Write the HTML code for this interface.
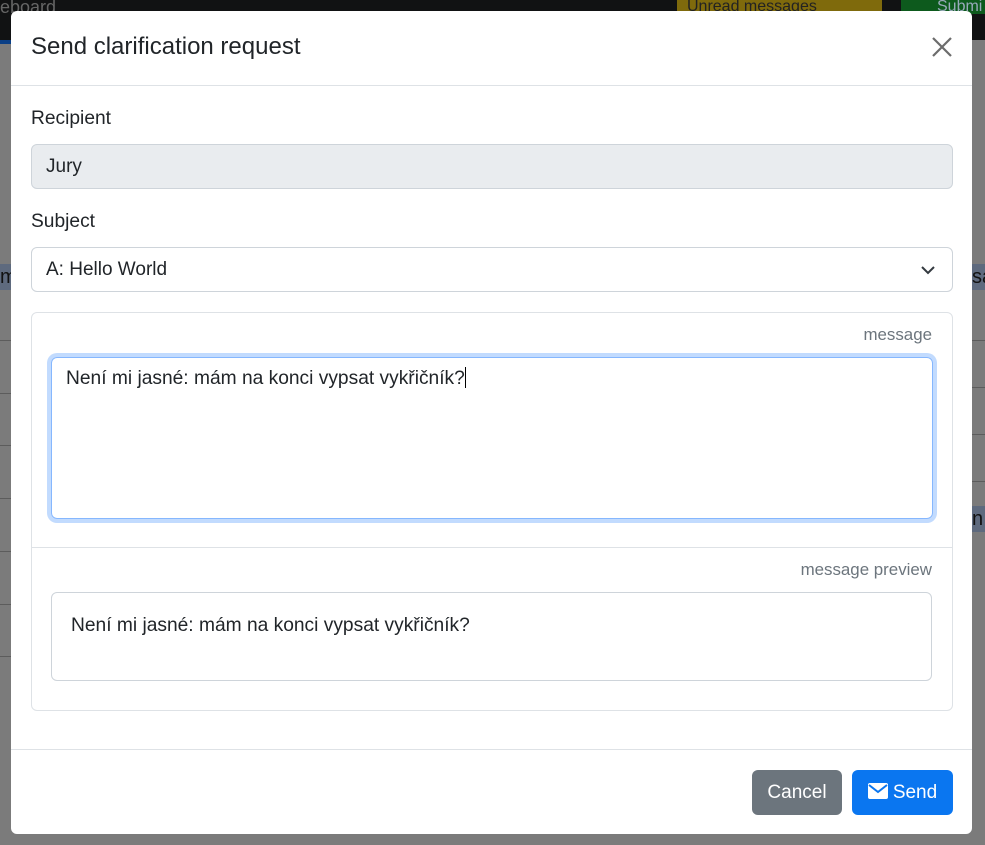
<!DOCTYPE html>
<html><head><meta charset="utf-8"><style>
*{box-sizing:border-box}
body{margin:0;width:985px;height:845px;overflow:hidden;background:#7b7b7b;font-family:"Liberation Sans",sans-serif;position:relative;color:#212529}
.nav{position:absolute;left:0;top:0;width:985px;height:40px;background:#111213}
.bluebar{position:absolute;left:0;top:40px;width:11px;height:4px;background:#0a3f86}
.unread{position:absolute;left:677px;top:0;width:205px;height:14px;background:#7f6a0c;color:#222;font-size:16px;line-height:14px;padding-left:10px;overflow:hidden}
.submit{position:absolute;left:901px;top:0;width:84px;height:14px;background:#0d5a1d;color:#9ab;font-size:16px;line-height:14px;padding-left:36px;overflow:hidden}
.sb{position:absolute;left:0;top:0;font-size:18px;color:#666;line-height:14px}
.hl{position:absolute;background:#5e6a7e;height:26px;font-size:20px;color:#111;line-height:26px;overflow:hidden}
.row{position:absolute;height:1px;background:#5c5c5c}
.modal{position:absolute;left:11px;top:11px;width:961px;height:823px;background:#fff;border-radius:6px}
.hdr{height:75px;border-bottom:1px solid #dee2e6;padding:20px 20px;font-size:24px;line-height:32px}
.close{position:absolute;right:20px;top:26px;width:20px;height:20px}
.lbl{position:absolute;left:20px;font-size:19.2px}
.inp{position:absolute;left:20px;width:922px;height:45px;border:1px solid #ced4da;border-radius:6px;font-size:19px;padding:0 14px;line-height:43px}
.card{position:absolute;left:20px;top:301px;width:922px;height:399px;border:1px solid #dee2e6;border-radius:6px}
.small{position:absolute;right:20px;font-size:16.9px;color:#6c757d}
.foot{position:absolute;left:0;top:738px;width:961px;border-top:1px solid #dee2e6}
.btn{position:absolute;top:759px;height:45px;border-radius:6px;color:#fff;font-size:19px;line-height:45px;text-align:center}
</style></head><body>
<div class="nav"><div class="sb">eboard</div></div>
<div class="bluebar"></div>
<div class="unread">Unread messages</div>
<div class="submit">Submi</div>
<div class="hl" style="left:0;top:264px;width:11px">m</div>
<div class="hl" style="left:972px;top:264px;width:13px">sa</div>
<div class="hl" style="left:972px;top:506px;width:13px">n</div>
<div class="row" style="left:0;top:340px;width:11px"></div><div class="row" style="left:0;top:393px;width:11px"></div><div class="row" style="left:0;top:445px;width:11px"></div><div class="row" style="left:0;top:498px;width:11px"></div><div class="row" style="left:0;top:551px;width:11px"></div><div class="row" style="left:0;top:604px;width:11px"></div><div class="row" style="left:0;top:656px;width:11px"></div>
<div class="row" style="left:972px;top:340px;width:13px"></div><div class="row" style="left:972px;top:387px;width:13px"></div><div class="row" style="left:972px;top:434px;width:13px"></div><div class="row" style="left:972px;top:481px;width:13px"></div>
<div class="modal">
<div class="hdr">Send clarification request</div>
<svg class="close" viewBox="0 0 20 20"><path d="M1 1L19 19M19 1L1 19" stroke="#6c6c6c" stroke-width="2.2"/></svg>
<div class="lbl" style="top:97px">Recipient</div>
<div class="inp" style="top:133px;background:#e9ecef;border-color:#ced4da">Jury</div>
<div class="lbl" style="top:200px">Subject</div>
<div class="inp" style="top:236px">A: Hello World
<svg style="position:absolute;right:16px;top:16px" width="16" height="12" viewBox="0 0 16 12"><path d="M2 3L8 9L14 3" stroke="#343a40" stroke-width="2" fill="none"/></svg></div>
<div class="card">
<div class="small" style="top:12px">message</div>
<div style="position:absolute;left:19px;top:44px;width:882px;height:162px;border:1px solid #86b7fe;border-radius:6px;box-shadow:0 0 0 4px #c2dbfe;padding:9px 14px;font-size:19.2px">Není mi jasné: mám na konci vypsat vykřičník?<span style="display:inline-block;width:1px;height:21px;background:#000;vertical-align:-4px"></span></div>
<div style="position:absolute;left:0;top:234px;width:920px;border-top:1px solid #dee2e6"></div>
<div class="small" style="top:247px">message preview</div>
<div style="position:absolute;left:19px;top:279px;width:881px;height:89px;border:1px solid #ced4da;border-radius:6px;padding:22px 19px;font-size:19.2px">Není mi jasné: mám na konci vypsat vykřičník?</div>
</div>
<div class="foot"></div>
<div class="btn" style="left:741px;width:90px;background:#6c757d">Cancel</div>
<div class="btn" style="left:841px;width:101px;background:#0a76f0"><svg width="20" height="16" viewBox="0 0 20 16" style="vertical-align:-1px;margin-right:5px"><rect x="0" y="0" width="20" height="16" rx="2" fill="#fff"/><path d="M1 2L10 9L19 2" stroke="#0a76f0" stroke-width="2" fill="none"/></svg>Send</div>
</div>
</body></html>
